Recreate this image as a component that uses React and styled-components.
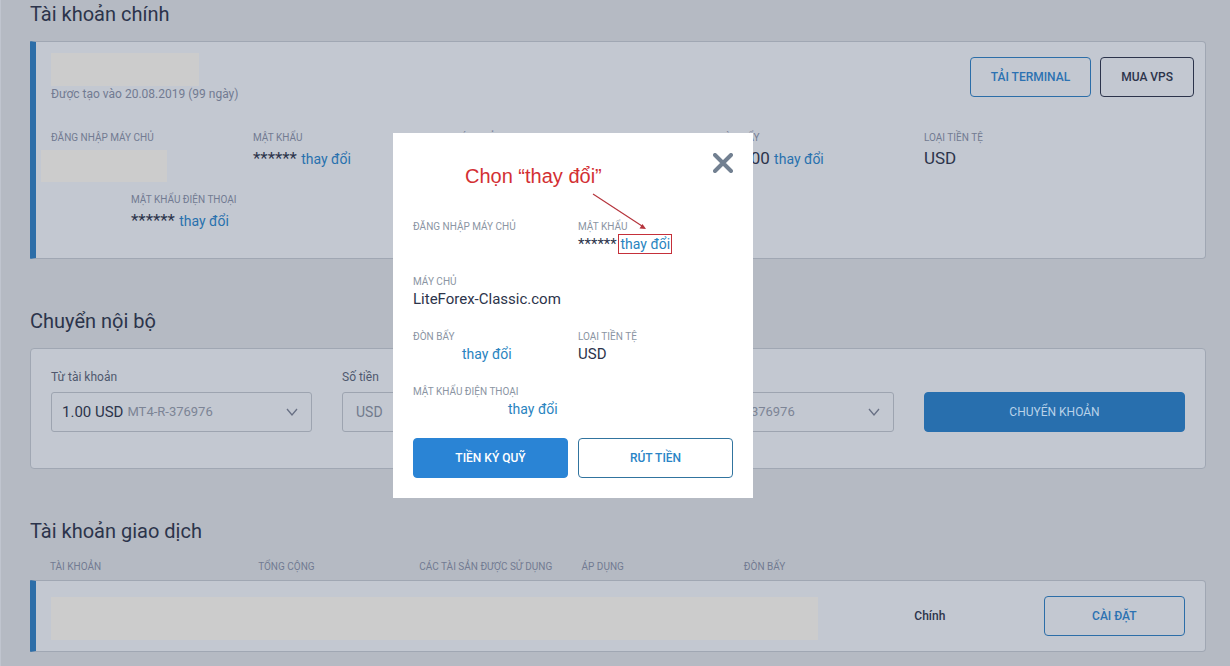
import React from "react";
import styled, { createGlobalStyle, css } from "styled-components";

const Global = createGlobalStyle`
  *, *::before, *::after { box-sizing: border-box; }
  body {
    margin: 0;
    min-height: 100vh;
    background: #b5bac3;
    border-left: 1px solid #c0c5cf;
    color: #2c344b;
    font: 14px/20px Roboto, sans-serif;
    overflow: hidden;
  }
  h1, h2, p, dl, dd, dt { margin: 0; font-weight: 400; }
  button, input, select { font-family: inherit; }
`;

const Page = styled.main`
  padding: 0 24px 0 29px;
`;

const Section = styled.section`
  padding-top: ${(p) => p.$top}px;
`;

const Title = styled.h2`
  font-size: 20px;
  line-height: 28px;
`;

const Card = styled.div`
  border: 1px solid #a0a7b3;
  border-radius: 4px;
  background: #c3c8d1;
  margin-top: 13px;
  padding: ${(p) => p.$pad};
  min-height: ${(p) => p.$min}px;
  ${(p) =>
    p.$marked &&
    css`
      border-left: 6px solid #2d6ea8;
      border-radius: 1px 4px 4px 1px;
    `}
`;

const CardHead = styled.div`
  display: flex;
  justify-content: space-between;
  align-items: flex-start;
  margin-right: -9px;
`;

const Muted = styled.p`
  font-size: 12px;
  line-height: 16px;
  color: #727b92;
`;

const Redacted = styled.div`
  background: #cccccc;
  width: ${(p) => p.$w || "100%"};
  height: ${(p) => p.$h}px;
`;

const LoginRedacted = styled(Redacted)`
  margin: 4px 0 0 -10px;
`;

const ButtonRow = styled.div`
  display: flex;
  gap: 9px;
  padding-top: 4px;
`;

const tones = {
  blue: css`color: #2c72b2; border-color: #2c6ea8; background: transparent;`,
  dark: css`color: #2c344b; border-color: #2c344b; background: transparent;`,
  solid: css`color: #b8d2e9; border-color: #286fae; background: #286fae; font-weight: 400;`,
  brightSolid: css`color: #fff; border-color: #2a84d5; background: #2a84d5;`,
  bright: css`color: #2a84c6; border-color: #31749f; background: #fff;`,
};

const Button = styled.button`
  height: 40px;
  padding: 0 20px;
  border: 1px solid;
  border-radius: 4px;
  font-size: 12px;
  font-weight: 500;
  white-space: nowrap;
  cursor: pointer;
  width: ${(p) => (p.$wide ? "100%" : "auto")};
  ${(p) => tones[p.$tone]}
`;

const Facts = styled.dl`
  display: grid;
  grid-template-columns: 202fr 199fr 266fr 206fr 261fr;
  margin-top: 28px;
`;

const PhoneFact = styled.dl`
  margin: 10px 0 0 80px;
`;

const Caption = styled.dt`
  font-size: 10px;
  line-height: 16px;
  color: ${(p) => (p.$light ? "#8b95a3" : "#727b92")};
`;

const Value = styled.dd`
  font-size: 17px;
  line-height: 24px;
`;

const Link = styled.a`
  color: #2871ae;
  font-size: 14px;
  text-decoration: none;
`;

const TransferForm = styled.form`
  display: grid;
  grid-template-columns: repeat(4, 1fr);
  gap: 30px;
  align-items: end;
`;

const Field = styled.div`
  display: flex;
  flex-direction: column;
  gap: 7px;
  font-size: 12px;
  line-height: 16px;
  color: #4f586e;
`;

const box = css`
  height: 40px;
  border: 1px solid #9da4b0;
  border-radius: 3px;
  background: transparent;
`;

const SelectBox = styled.div`
  ${box}
  display: grid;
  align-items: center;
`;

const SelectFace = styled.span`
  grid-area: 1 / 1;
  display: flex;
  align-items: center;
  gap: 4px;
  padding: 0 12px 0 10px;
  font-size: 15px;
  color: #2c344b;
  svg { margin-left: auto; }
`;

const AccountNo = styled.span`
  font-size: 13px;
  color: #7c8495;
`;

const NativeSelect = styled.select`
  grid-area: 1 / 1;
  width: 100%;
  height: 38px;
  opacity: 0;
  cursor: pointer;
`;

const AmountInput = styled.input`
  ${box}
  width: 100%;
  padding: 0 13px;
  font-size: 14px;
  &::placeholder { color: #727b8d; opacity: 1; }
`;

const Accounts = styled.table`
  width: 100%;
  margin-top: 14px;
  border-collapse: separate;
  border-spacing: 0;
  table-layout: fixed;
`;

const Th = styled.th`
  padding: 0 0 5px ${(p) => (p.$first ? 20 : 0)}px;
  font-size: 10px;
  line-height: 16px;
  font-weight: 400;
  text-align: left;
  white-space: nowrap;
  color: #727b92;
`;

const Td = styled.td`
  height: 72px;
  padding: 0;
  background: #c3c8d1;
  border: 1px solid #a0a7b3;
  border-width: 1px 0;
  font-size: 12px;
  font-weight: 500;
  &:first-child {
    padding: 4px 96px 0 15px;
    border-left: 6px solid #2d6ea8;
    border-radius: 1px 0 0 1px;
  }
  &:last-child {
    padding-right: 20px;
    border-right-width: 1px;
    border-radius: 0 4px 4px 0;
  }
`;

const Overlay = styled.div`
  position: fixed;
  inset: 0;
  display: flex;
  align-items: center;
  justify-content: center;
  padding: 0 84px 35px 0;
`;

const Dialog = styled.div`
  position: relative;
  width: 360px;
  padding: 20px;
  background: #fff;
`;

const DialogTop = styled.div`
  display: flex;
  justify-content: flex-end;
  align-items: flex-start;
  height: 66px;
`;

const CloseButton = styled.button`
  display: flex;
  padding: 0;
  border: 0;
  background: none;
  cursor: pointer;
`;

const DialogFacts = styled.dl`
  display: grid;
  grid-template-columns: 1fr 1fr;
  column-gap: 10px;
  row-gap: 21px;
`;

const DialogFact = styled.div`
  grid-column: ${(p) => (p.$full ? "1 / -1" : "auto")};
`;

const DialogValue = styled.dd`
  height: 18px;
  padding-left: ${(p) => p.$indent || 0}px;
  font-size: 15px;
  line-height: 18px;
`;

const DialogLink = styled(Link)`
  color: #2a84c0;
  ${(p) => p.$boxed && "outline: 1px solid #c5303a; outline-offset: 1px;"}
`;

const DialogButtons = styled.div`
  display: grid;
  grid-template-columns: 1fr 1fr;
  gap: 10px;
  margin-top: 20px;
`;

const Note = styled.p`
  position: absolute;
  top: 31px;
  left: 72px;
  font: 20px/24px "Liberation Sans", sans-serif;
  color: #d32f33;
`;

const Arrow = styled.svg`
  position: absolute;
  top: 60px;
  left: 199px;
`;

const Chevron = () => (
  <svg width="14" height="14" viewBox="0 0 14 14" fill="none" stroke="#687084" strokeWidth="1.3" aria-hidden="true">
    <path d="M2 4l5 6 5-6" />
  </svg>
);

function AccountSelect({ id, label }) {
  return (
    <Field>
      <label htmlFor={id}>{label}</label>
      <SelectBox>
        <SelectFace aria-hidden="true">
          1.00 USD <AccountNo>MT4-R-376976</AccountNo>
          <Chevron />
        </SelectFace>
        <NativeSelect id={id}>
          <option>1.00 USD MT4-R-376976</option>
        </NativeSelect>
      </SelectBox>
    </Field>
  );
}

export default function App() {
  return (
    <>
      <Global />
      <Page>
        <Section $top={0}>
          <Title>Tài khoản chính</Title>
          <Card $marked $min={218} $pad="11px 20px 11px 15px">
            <CardHead>
              <div>
                <Redacted $w="148px" $h={33} />
                <Muted>Được tạo vào 20.08.2019 (99 ngày)</Muted>
              </div>
              <ButtonRow>
                <Button $tone="blue">TẢI TERMINAL</Button>
                <Button $tone="dark">MUA VPS</Button>
              </ButtonRow>
            </CardHead>
            <Facts>
              <div>
                <Caption>ĐĂNG NHẬP MÁY CHỦ</Caption>
                <dd><LoginRedacted $w="126px" $h={32} /></dd>
              </div>
              <div>
                <Caption>MẬT KHẨU</Caption>
                <Value>****** <Link href="#password">thay đổi</Link></Value>
              </div>
              <div>
                <Caption>MÁY CHỦ</Caption>
              </div>
              <div>
                <Caption>ĐÒN BẨY</Caption>
                <Value>1:1000 <Link href="#leverage">thay đổi</Link></Value>
              </div>
              <div>
                <Caption>LOẠI TIỀN TỆ</Caption>
                <Value>USD</Value>
              </div>
            </Facts>
            <PhoneFact>
              <Caption>MẬT KHẨU ĐIỆN THOẠI</Caption>
              <Value>****** <Link href="#phone-password">thay đổi</Link></Value>
            </PhoneFact>
          </Card>
        </Section>

        <Section $top={48}>
          <Title>Chuyển nội bộ</Title>
          <Card $min={121} $pad="20px">
            <TransferForm>
              <AccountSelect id="from" label="Từ tài khoản" />
              <Field>
                <label htmlFor="amount">Số tiền</label>
                <AmountInput id="amount" placeholder="USD" />
              </Field>
              <AccountSelect id="to" label="Đến tài khoản" />
              <Button type="button" $tone="solid" $wide>CHUYỂN KHOẢN</Button>
            </TransferForm>
          </Card>
        </Section>

        <Section $top={48}>
          <Title>Tài khoản giao dịch</Title>
          <Accounts>
            <colgroup>
              <col style={{ width: "19.4%" }} />
              <col style={{ width: "13.7%" }} />
              <col style={{ width: "13.8%" }} />
              <col style={{ width: "13.8%" }} />
              <col style={{ width: "14.5%" }} />
              <col style={{ width: "11%" }} />
              <col />
            </colgroup>
            <thead>
              <tr>
                <Th $first>TÀI KHOẢN</Th>
                <Th>TỔNG CỘNG</Th>
                <Th>CÁC TÀI SẢN ĐƯỢC SỬ DỤNG</Th>
                <Th>ÁP DỤNG</Th>
                <Th>ĐÒN BẨY</Th>
                <Th />
                <Th />
              </tr>
            </thead>
            <tbody>
              <tr>
                <Td colSpan={5}><Redacted $h={43} /></Td>
                <Td>Chính</Td>
                <Td><Button $tone="blue" $wide>CÀI ĐẶT</Button></Td>
              </tr>
            </tbody>
          </Accounts>
        </Section>
      </Page>

      <Overlay>
        <Dialog role="dialog" aria-modal="true" aria-label="Tài khoản">
          <DialogTop>
            <CloseButton aria-label="Đóng">
              <svg width="20" height="20" viewBox="0 0 20 20" stroke="#728091" strokeWidth="4" strokeLinecap="round">
                <path d="M2 2l16 16M18 2L2 18" />
              </svg>
            </CloseButton>
          </DialogTop>
          <DialogFacts>
            <DialogFact>
              <Caption $light>ĐĂNG NHẬP MÁY CHỦ</Caption>
              <DialogValue />
            </DialogFact>
            <DialogFact>
              <Caption $light>MẬT KHẨU</Caption>
              <DialogValue>****** <DialogLink $boxed href="#password">thay đổi</DialogLink></DialogValue>
            </DialogFact>
            <DialogFact $full>
              <Caption $light>MÁY CHỦ</Caption>
              <DialogValue>LiteForex-Classic.com</DialogValue>
            </DialogFact>
            <DialogFact>
              <Caption $light>ĐÒN BẨY</Caption>
              <DialogValue $indent={49}><DialogLink href="#leverage">thay đổi</DialogLink></DialogValue>
            </DialogFact>
            <DialogFact>
              <Caption $light>LOẠI TIỀN TỆ</Caption>
              <DialogValue>USD</DialogValue>
            </DialogFact>
            <DialogFact $full>
              <Caption $light>MẬT KHẨU ĐIỆN THOẠI</Caption>
              <DialogValue $indent={95}><DialogLink href="#phone-password">thay đổi</DialogLink></DialogValue>
            </DialogFact>
          </DialogFacts>
          <DialogButtons>
            <Button $tone="brightSolid">TIỀN KÝ QUỸ</Button>
            <Button $tone="bright">RÚT TIỀN</Button>
          </DialogButtons>
          <Note>Chọn “thay đổi”</Note>
          <Arrow width="56" height="38" viewBox="0 0 56 38" aria-hidden="true">
            <path d="M1 1L50 33" stroke="#b5343c" strokeWidth="1.2" />
            <path d="M54 36l-6.500-.5 3-4.500z" fill="#b5343c" />
          </Arrow>
        </Dialog>
      </Overlay>
    </>
  );
}
